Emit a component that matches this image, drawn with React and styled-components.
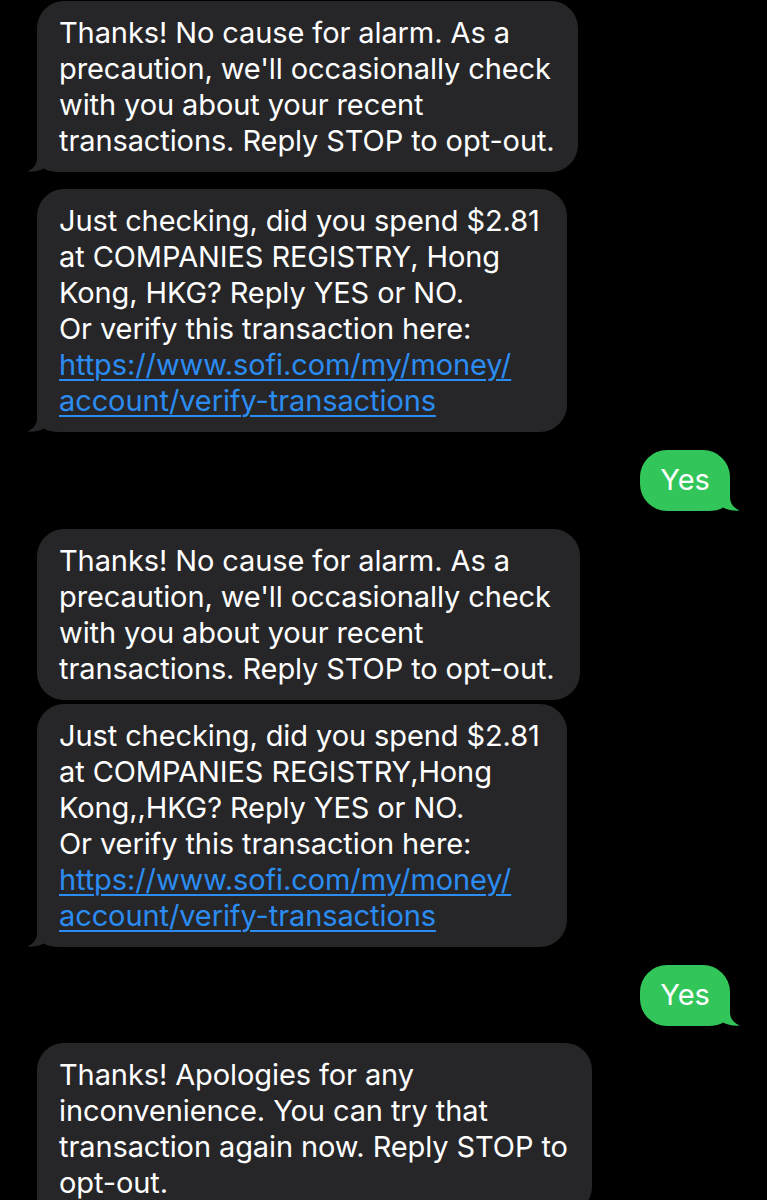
import React from "react";
import styled, { createGlobalStyle, css } from "styled-components";

const Global = createGlobalStyle`
  html, body { margin: 0; padding: 0; background: #000; }
  body { font-family: Inter, "Open Sans", sans-serif; -webkit-font-smoothing: antialiased; }
`;

const Thread = styled.div`
  display: flex;
  flex-direction: column;
  padding: 1px 37px 0;
  background: #000;
  min-height: 1200px;
  box-sizing: border-box;
`;

const GREY = "#262629";
const GREEN = "#32c65a";

const Bubble = styled.div`
  position: relative;
  box-sizing: border-box;
  width: ${(p) => p.$w}px;
  margin-top: ${(p) => p.$mt || 0}px;
  align-self: ${(p) => (p.$me ? "flex-end" : "flex-start")};
  background: ${(p) => (p.$me ? GREEN : GREY)};
  color: #fff;
  border-radius: 27px;
  padding: ${(p) => (p.$me ? "12px 0 13px" : "14px 22px 13px")};
  text-align: ${(p) => (p.$me ? "center" : "left")};
  font-size: 29px;
  line-height: 36px;
  letter-spacing: -0.1px;
  white-space: nowrap;
`;

const Content = styled.span`
  position: relative;
  z-index: 1;
`;

const TailSvg = styled.svg`
  position: absolute;
  bottom: 0;
  width: 36px;
  height: 28px;
  z-index: 0;
  ${(p) =>
    p.$me
      ? css`
          right: -11px;
          transform: scaleX(-1);
        `
      : css`
          left: -11px;
        `}
`;

const Tail = ({ me }) => (
  <TailSvg $me={me} viewBox="0 0 36 28" aria-hidden="true">
    <path
      d="M11 0 L11 14 C11 21 7 25 1 27.6 C8 28.2 14 26.5 18 24.5 C21 26.5 26 28 33 28 L36 28 L36 0 Z"
      fill={me ? GREEN : GREY}
    />
  </TailSvg>
);

const Link = styled.a`
  color: #2b8cf2;
  text-decoration: underline;
  text-decoration-thickness: 1.5px;
  text-underline-offset: 4px;
`;

const Msg = ({ w, mt, me, tail, children }) => (
  <Bubble $w={w} $mt={mt} $me={me}>
    {tail && <Tail me={me} />}
    <Content>{children}</Content>
  </Bubble>
);

export default function App() {
  return (
    <>
      <Global />
      <Thread>
        <Msg w={541} tail>
          Thanks! No cause for alarm. As a<br />
          precaution, we'll occasionally check<br />
          with you about your recent<br />
          transactions. Reply STOP to opt-out.
        </Msg>
        <Msg w={530} mt={17} tail>
          Just checking, did you spend $2.81<br />
          at COMPANIES REGISTRY, Hong<br />
          Kong, HKG? Reply YES or NO.<br />
          Or verify this transaction here:<br />
          <Link href="#">https://www.sofi.com/my/money/</Link>
          <br />
          <Link href="#">account/verify-transactions</Link>
        </Msg>
        <Msg w={90} mt={18} me tail>
          Yes
        </Msg>
        <Msg w={543} mt={18}>
          Thanks! No cause for alarm. As a<br />
          precaution, we'll occasionally check<br />
          with you about your recent<br />
          transactions. Reply STOP to opt-out.
        </Msg>
        <Msg w={530} mt={4} tail>
          Just checking, did you spend $2.81<br />
          at COMPANIES REGISTRY,Hong<br />
          Kong,,HKG? Reply YES or NO.<br />
          Or verify this transaction here:<br />
          <Link href="#">https://www.sofi.com/my/money/</Link>
          <br />
          <Link href="#">account/verify-transactions</Link>
        </Msg>
        <Msg w={90} mt={18} me tail>
          Yes
        </Msg>
        <Msg w={555} mt={17} tail>
          Thanks! Apologies for any<br />
          inconvenience. You can try that<br />
          transaction again now. Reply STOP to<br />
          opt-out.
        </Msg>
      </Thread>
    </>
  );
}
